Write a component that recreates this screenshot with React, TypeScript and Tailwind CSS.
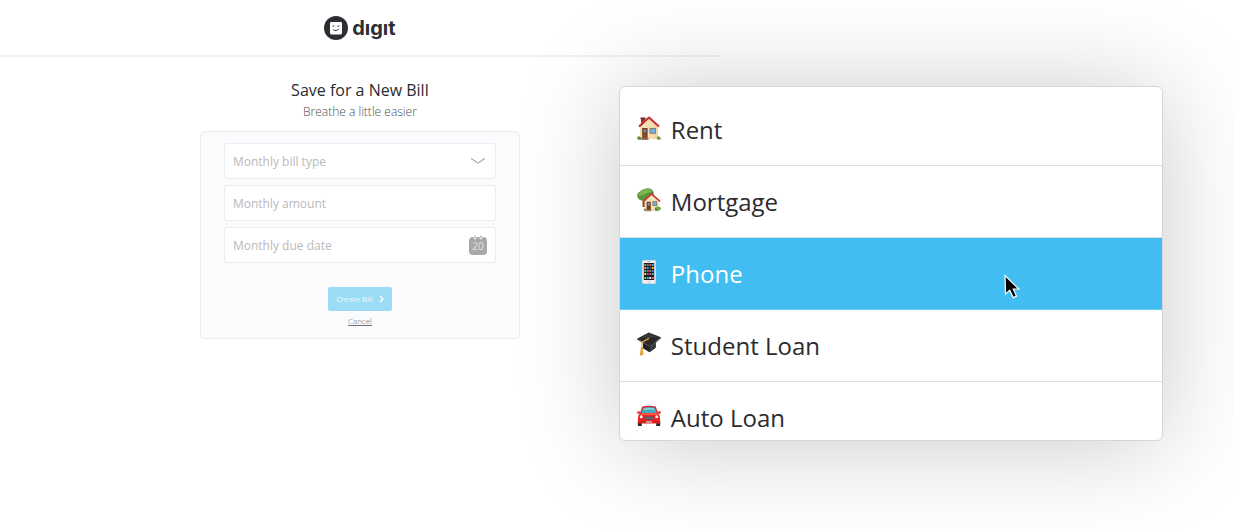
import type { ReactNode } from "react";

function LogoMark() {
  return (
    <svg viewBox="0 0 24 24" className="size-6" aria-hidden="true">
      <circle cx="12" cy="12" r="12" fill="#2d2e33" />
      <rect x="6" y="6" width="12" height="12.400" rx="1.400" fill="#fff" />
      <circle cx="9.300" cy="10" r="0.8" fill="#2d2e33" />
      <path d="M13.300 10.400l2.200-.6" stroke="#2d2e33" strokeWidth="0.9" />
      <path d="M9.600 14c1.600 1.200 4 .8 5-1" fill="none" stroke="#2d2e33" strokeWidth="1" strokeLinecap="round" />
    </svg>
  );
}

function HouseIcon() {
  return (
    <svg viewBox="0 0 24 24" className="size-6" aria-hidden="true">
      <path d="M4 2h4v8H4z" fill="#8c3b34" />
      <path d="M3.500 1.500h5v1.800h-5z" fill="#6d2a28" />
      <path d="M3 11 12 2.200 21 11v12H3z" fill="#f4dfb5" />
      <path d="M16 7l5 4.500V23h-5z" fill="#ecd09c" opacity=".6" />
      <path d="M2 10.400 12 1.600l10 8.800" fill="none" stroke="#b9272b" strokeWidth="2" strokeLinejoin="round" />
      <path d="M2.400 9.400 12 .9l9.600 8.500" fill="none" stroke="#e65a52" strokeWidth=".7" />
      <path d="M5.200 12h5.400v11H5.200z" fill="#75391f" />
      <path d="M6.600 13.200h2.600v3.600H6.600z" fill="#5f91b0" />
      <path d="M6.400 18h3v4h-3z" fill="#914c2a" />
      <path d="M12.600 12h6.200v5.800h-6.200z" fill="#8b644d" />
      <path d="M13.400 12.800H18V17h-4.600z" fill="#66b3e4" />
      <path d="M4.500 22.200h7V24h-7z" fill="#9a7363" />
      <circle cx="1.800" cy="22" r="1.700" fill="#67953b" />
      <circle cx="3.200" cy="22.500" r="1.300" fill="#4e7d2e" />
      <circle cx="21.400" cy="22" r="1.700" fill="#67953b" />
      <circle cx="22.600" cy="22.400" r="1.300" fill="#82aa4d" />
    </svg>
  );
}

function GardenHouseIcon() {
  return (
    <svg viewBox="0 0 24 24" className="size-6" aria-hidden="true">
      <path d="M5.500 10h3v9h-3z" fill="#83552f" />
      <path d="M8 .8c4-1.600 8 .2 8.800 4 .2 4-3 7.800-8.300 7.500C4 13.500.4 11.500.2 7.600 0 5 2 4.200 3.400 3.200 4.600 2 6.300 1.300 8 .8z" fill="#5a9439" />
      <path d="M4 3.600C6 .8 11-.2 14 2.200c1 1.200.6 2-.6 2.200-2.400-.3-4.400.8-6 2.300-2 1.200-4 .6-5.800 1.600C.8 5.900 2.800 4.900 4 3.600z" fill="#7db350" />
      <path d="M7.600 13 14.500 6.300l7.500 7V23H7.600z" fill="#f5e2b9" />
      <path d="M7 12.800 14.500 5.800l8.500 7.600" fill="none" stroke="#c43a35" strokeWidth="1.700" strokeLinejoin="round" />
      <path d="M9.600 13.800h4.200V22H9.600z" fill="#7c3c22" />
      <path d="M10.700 15h2v2.500h-2z" fill="#759db0" />
      <path d="M15.500 13.300h4.700v4.800h-4.700z" fill="#8b644d" />
      <path d="M16.200 14h3.300v3.400h-3.300z" fill="#62b2e6" />
      <path d="M8.500 21.700h6v1.500h-6z" fill="#a38475" />
      <circle cx="19.800" cy="21" r="2.100" fill="#578a34" />
      <circle cx="21.700" cy="20.600" r="2.100" fill="#75a847" />
      <circle cx="8" cy="21.800" r="1.200" fill="#719a40" />
    </svg>
  );
}

const appColours = [
  "#67b94b", "#71747b", "#e3554d", "#54aee4",
  "#ef9b35", "#3f8fda", "#47494f", "#e6bb42",
  "#4ab5c4", "#db4b90", "#4ba957", "#5b6fd6",
  "#f0d44f", "#e15a34", "#8b58b7", "#50b4e2",
];

function PhoneIcon() {
  return (
    <svg viewBox="0 0 24 24" className="size-6" aria-hidden="true">
      <rect x="5" y="0" width="14" height="24" rx="2" fill="#f1f1f2" />
      <rect x="5.400" y=".4" width="13.200" height="23.200" rx="1.700" fill="none" stroke="#c9cdd0" strokeWidth=".7" />
      <rect x="6.800" y="3" width="10.400" height="17" fill="#1b1c23" />
      {appColours.map((colour, i) => (
        <rect key={i} x={7.3 + (i % 4) * 2.5} y={4 + Math.floor(i / 4) * 3} width="1.900" height="1.900" rx=".3" fill={colour} />
      ))}
      <path d="M7.300 17h1.900v2H7.300z" fill="#59c65b" />
      <path d="M9.800 17h1.900v2H9.800z" fill="#4faee9" />
      <path d="M12.300 17h1.900v2h-1.900z" fill="#dce4ec" />
      <path d="M14.800 17h1.900v2h-1.900z" fill="#ef6a50" />
      <path d="M10.500 1.600h3" stroke="#858585" strokeWidth=".6" />
      <circle cx="12" cy="21.900" r="1" fill="#fff" stroke="#b8b8b8" strokeWidth=".5" />
    </svg>
  );
}

function GraduationIcon() {
  return (
    <svg viewBox="0 0 24 24" className="size-6" aria-hidden="true">
      <path d="M6 10.500 18.800 9l-.2 6.800-6.200 4.400L6 16.200z" fill="#222224" />
      <path d="M12.500 14 18.800 9l-.2 6.800-6.200 4.400z" fill="#39393b" />
      <path d="M0 6.800 11.700.6 24 5.300 13.300 14z" fill="#29292b" />
      <path d="M0 6.800 13.300 14 24 5.300v1.100L13.400 15.200 0 7.700z" fill="#515154" />
      <path d="M1.500 6.800 11.700 1.400 22 5.400 12 5.800z" fill="#3a3a3c" />
      <path d="M12 6.400 5 10.200 4.800 17" fill="none" stroke="#e5a437" strokeWidth="1.200" strokeLinejoin="round" />
      <path d="m4 15.500 2 .2.400 7.300-3.500.5z" fill="#d98c23" />
      <path d="m4.600 17-.4 6M5.500 17v6" stroke="#f5c766" strokeWidth=".5" />
    </svg>
  );
}

function CarIcon() {
  return (
    <svg viewBox="0 0 24 24" className="size-6" aria-hidden="true">
      <path d="M.8 17h4v5H1.500q-.7 0-.7-.8zM19.200 17h4v4.200q0 .8-.7.800h-3.300z" fill="#252629" />
      <path d="M5.300 2.500Q12 .8 18.700 2.500L21.200 9.500H2.800z" fill="#d92523" />
      <path d="M6.200 3.700Q12 2.400 17.800 3.700L19.700 9H4.300z" fill="#46a9bd" />
      <path d="M7 4.400Q12 3.400 17 4.400L17.600 6Q12 5 6.300 6z" fill="#93d5dc" />
      <path d="M.5 7.500q2.600-.8 3 1L3.800 9.800H1q-1-.5-1-1.300zM23.500 7.500q-2.600-.8-3 1L20.200 9.800H23q1-.5 1-1.300z" fill="#ed302a" />
      <path d="M3.300 9.200h17.400q2.300 1.400 2.300 4v5.600q0 .8-.8.800H1.800q-.8 0-.8-.8v-5.600q0-2.600 2.300-4z" fill="#ec2421" />
      <path d="M4.500 9.600h15l1.300 1.500H3.200z" fill="#ff5548" />
      <path d="M7 12.400h10l-.8 3.400H7.800z" fill="#59464c" />
      <path d="M7.800 13.300h8.400M8 14.600h8" stroke="#8f858b" strokeWidth=".5" />
      <circle cx="4.200" cy="12.800" r="1.500" fill="#f2eee2" />
      <circle cx="19.800" cy="12.800" r="1.500" fill="#f2eee2" />
      <path d="M1.200 17.200h21.600v1.300H1.200z" fill="#c9191b" />
      <path d="M9 17.200h6v1.500H9z" fill="#c9bdbb" />
    </svg>
  );
}

function CalendarIcon() {
  return (
    <span className="relative flex h-5 w-[18px] shrink-0 flex-col justify-end" aria-hidden="true">
      <svg viewBox="0 0 18 20" className="absolute inset-0 h-5 w-[18px]">
        <rect y="2" width="18" height="18" rx="4" fill="#a8a8a8" />
        <path d="M6 1v2M12 1v2" stroke="#fff" strokeWidth="2.800" strokeLinecap="round" />
        <path d="M6 1v2M12 1v2" stroke="#c4c4c4" strokeWidth="1.600" strokeLinecap="round" />
      </svg>
      <span className="relative text-center text-[10px] leading-[18px] text-[#e4e4e4]">20</span>
    </span>
  );
}

type Bill = { label: string; icon: ReactNode };

const bills: Bill[] = [
  { label: "Rent", icon: <HouseIcon /> },
  { label: "Mortgage", icon: <GardenHouseIcon /> },
  { label: "Phone", icon: <PhoneIcon /> },
  { label: "Student Loan", icon: <GraduationIcon /> },
  { label: "Auto Loan", icon: <CarIcon /> },
];

function BillMenu() {
  const highlighted = "Phone";
  return (
    <div className="absolute top-[86px] right-[71px] w-[44.1%] rounded-md border border-[#d6d6d8] bg-white shadow-[0_4px_100px_rgba(0,0,0,0.21)]">
      <ul role="listbox" aria-label="Bill types" className="max-h-[353px] overflow-hidden rounded-md pt-[7px]">
        {bills.map(({ label, icon }) => (
          <li
            key={label}
            role="option"
            aria-selected={label === highlighted}
            className={
              label === highlighted
                ? "flex h-[72px] items-center gap-[10px] border-b border-[#6dcbf2] bg-[#41bdf1] px-[17px] text-2xl text-white"
                : "flex h-[72px] items-center gap-[10px] border-b border-[#d9dce0] px-[17px] text-2xl text-[#2b2c2f]"
            }
          >
            <span className="pb-1">{icon}</span>
            {label}
          </li>
        ))}
      </ul>
      <svg viewBox="0 0 16 26" className="absolute top-[187px] right-[142px] h-[26px] w-4" aria-hidden="true">
        <path d="M1 1.500 1.500 20l4.300-3.700 3.400 7.300 3.300-1.500-3.300-7.100h5.600z" fill="#000" stroke="#fff" strokeWidth="1.200" />
      </svg>
    </div>
  );
}

export default function App() {
  const field = "flex h-9 w-full items-center rounded-[3px] border border-[#ebecef] bg-white px-2 text-xs text-[#b9b9b9]";
  return (
    <div className="relative min-h-screen overflow-hidden bg-white font-['Open_Sans','Noto_Sans',sans-serif]">
      <div className="w-7/12">
        <header className="flex h-[57px] items-center justify-center border-b-2 border-[#f0f0f1]">
          <a href="#" aria-label="digit" className="flex items-center gap-1 text-[#2d2e33]">
            <LogoMark />
            <span className="font-['Inter',sans-serif] text-[20px] leading-6 font-bold">dıgıt</span>
          </a>
        </header>
        <main className="flex flex-col items-center pt-[21px]">
          <h1 className="text-base leading-6 text-[#2b2c2f]">Save for a New Bill</h1>
          <p className="text-xs leading-5 font-light text-[#4c4d50]">Breathe a little easier</p>
          <form className="mt-[9px] flex w-80 flex-col items-center rounded-[5px] border border-[#ebecef] bg-[#fafbfd] px-[23px] pt-[11px] pb-[11px]">
            <div className="flex w-full flex-col gap-[6px]">
              <div className="relative">
                <select aria-label="Monthly bill type" defaultValue="" className={`${field} appearance-none pt-px`}>
                  <option value="" disabled>Monthly bill type</option>
                  {bills.map(({ label }) => (
                    <option key={label}>{label}</option>
                  ))}
                </select>
                <svg viewBox="0 0 14 6" className="pointer-events-none absolute top-[15px] right-[11px] h-[6px] w-[14px]" aria-hidden="true">
                  <path d="M.5.700 6 4.600q1 .6 2 0L13.500.700" fill="none" stroke="#aaa" strokeWidth="1.200" strokeLinecap="round" />
                </svg>
              </div>
              <input aria-label="Monthly amount" placeholder="Monthly amount" className={`${field} placeholder:text-[#b9b9b9]`} />
              <label className={field}>
                <input aria-label="Monthly due date" placeholder="Monthly due date" className="h-full min-w-0 flex-1 bg-transparent placeholder:text-[#b9b9b9]" />
                <CalendarIcon />
              </label>
            </div>
            <button type="button" className="mt-6 flex h-6 items-center gap-[6px] rounded-[2px] bg-[#9cddf6] px-2 font-['Noto_Sans',sans-serif] text-[8px] font-light text-white">
              Create Bill
              <svg viewBox="0 0 5 8" className="h-2 w-[5px]" aria-hidden="true">
                <path d="m1 1 3 3-3 3" fill="none" stroke="#fff" strokeWidth="1.300" />
              </svg>
            </button>
            <a href="#" className="mt-1 text-[8px] leading-3 font-light text-[#717275] underline">Cancel</a>
          </form>
        </main>
      </div>
      <BillMenu />
    </div>
  );
}
